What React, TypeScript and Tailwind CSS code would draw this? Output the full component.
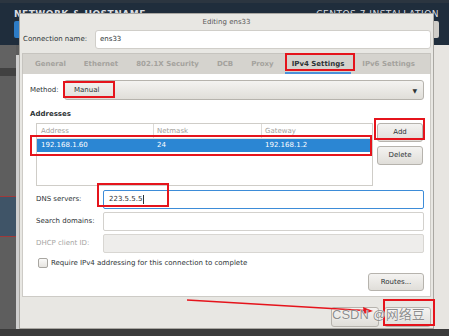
import * as React from "react"

const tabs = [
  { label: "General" },
  { label: "Ethernet" },
  { label: "802.1X Security" },
  { label: "DCB" },
  { label: "Proxy" },
  { label: "IPv4 Settings", active: true },
  { label: "IPv6 Settings" },
]

// red annotation boxes drawn on top of the screenshot
const marks = [
  "left-[285px] top-[53px] w-[70px] h-[18px]",
  "left-[63px] top-[81px] w-[52px] h-[17px]",
  "left-[30px] top-[135px] w-[342px] h-[21px]",
  "left-[374px] top-[118px] w-[51px] h-[22px]",
  "left-[97px] top-[183px] w-[72px] h-[24px]",
  "left-[383px] top-[299px] w-[52px] h-[27px]",
]

const btnBase =
  "flex items-center rounded-[3px] border border-[#b6b3ad] bg-gradient-to-b from-[#f4f3f1] to-[#e0ded9] text-[#2e3436]"

function Field({
  label,
  value,
  focused,
  disabled,
}: {
  label: string
  value?: string
  focused?: boolean
  disabled?: boolean
}) {
  return (
    <div className="flex items-center h-[19px]">
      <span
        className={
          "w-[67px] shrink-0 " + (disabled ? "text-[#a5a5a3]" : "text-[#2e3436]")
        }
      >
        {label}
      </span>
      <div
        className={
          "flex-1 h-full rounded-[2px] flex items-center px-[5px] " +
          (focused
            ? "border border-[#3d8cd8] bg-white"
            : disabled
              ? "border border-[#d8d6d2] bg-[#eeedeb]"
              : "border border-[#d3d1cd] bg-white")
        }
      >
        {value && (
          <span className="text-[#2e3436]">
            {value}
            <span className="inline-block w-px h-[9px] bg-[#2e3436] align-middle ml-px" />
          </span>
        )}
      </div>
    </div>
  )
}

function Btn({ children, className }: { children?: React.ReactNode; className?: string }) {
  return <div className={btnBase + " justify-center " + (className ?? "")}>{children}</div>
}

export default function App() {
  return (
    <div className="relative w-[449px] h-[336px] overflow-hidden bg-[#5c5c5c] font-['DejaVu_Sans',sans-serif] text-[7px] leading-[9px]">
      {/* underlying installer screen (dimmed) */}
      <div className="flex flex-col h-full">
        <div className="h-[45px] shrink-0 bg-[#1f2d3c] border-t-[3px] border-[#2b3540] flex justify-between">
          <div className="pl-[14px] pt-[7px] flex flex-col gap-[2px]">
            <span className="text-[#d9dde2] font-bold text-[9px] leading-[9px] tracking-[0.5px]">
              NETWORK &amp; HOSTNAME
            </span>
            <div className="w-[40px] h-[17px] rounded-[2px] bg-[#2d7cc6]" />
          </div>
          <div className="pr-[10px] pt-[7px] flex flex-col items-end gap-[2px]">
            <span className="text-[#d9dde2] text-[9px] leading-[9px] tracking-[0.5px]">
              CENTOS 7 INSTALLATION
            </span>
            <div className="w-[40px] h-[17px] rounded-[2px] bg-[#cfcdc8]" />
          </div>
        </div>
        <div className="flex flex-1">
          <div className="w-[16px] flex flex-col">
            <div className="h-[23px] bg-[#626262]" />
            <div className="h-[8px] bg-[#414141]" />
            <div className="h-[120px] bg-[#5e5e5e]" />
            <div className="h-px bg-[#a03a3a]" />
            <div className="h-[39px] bg-[#3f5467]" />
            <div className="h-px bg-[#a03a3a]" />
            <div className="flex-1 bg-[#5e5e5e]" />
          </div>
          <div className="w-[3px] mt-[10px] bg-[#cfcfcf]" />
          <div className="flex-1 bg-[#e7e5e1]" />
        </div>
        <div className="h-[7px] shrink-0 bg-[#3b3b3b]" />
      </div>

      {/* Editing dialog */}
      <div className="absolute left-[19px] top-[13px] w-[415px] h-[316px] border border-[#a9a7a2] bg-[#e8e7e3] px-[2px] flex flex-col">
        <div className="h-[16px] shrink-0 flex items-center justify-center text-[#5a5a5a]">
          Editing ens33
        </div>

        <div className="h-[19px] shrink-0 flex items-center pl-px">
          <span className="text-[#2e3436] w-[72px] shrink-0">Connection name:</span>
          <div className="flex-1 h-full rounded-[3px] border border-[#d0cec9] bg-white flex items-center px-[4px] text-[#2e3436]">
            ens33
          </div>
        </div>

        {/* notebook */}
        <div className="mt-[4px] h-[21px] shrink-0 bg-[#d5d3ce] border border-b-0 border-[#c6c4bf] flex pl-[5px] gap-[4px]">
          {tabs.map((t) => (
            <div
              key={t.label}
              className={
                "h-full flex items-center px-[7px] font-bold " +
                (t.active
                  ? "text-[#2e3436] border-b-[2px] border-[#4a90d9] pt-[2px]"
                  : "text-[#a4a29d]")
              }
            >
              {t.label}
            </div>
          ))}
        </div>

        <div className="h-[223px] shrink-0 bg-white border border-t-0 border-[#cdcbc6] pl-[7px] pr-[6px] pt-[6px] flex flex-col">
          <div className="flex items-center h-[20px]">
            <span className="text-[#2e3436] w-[34px] shrink-0">Method:</span>
            <div className={btnBase + " flex-1 h-full justify-between pl-[9px] pr-[6px]"}>
              <span>Manual</span>
              <span className="text-[6px]">▼</span>
            </div>
          </div>

          <div className="mt-[10px] font-bold text-[#2e3436]">Addresses</div>

          <div className="mt-[4px] flex gap-[4px] pl-[6px]">
            <div className="w-[337px] h-[63px] border border-[#cfcdc8] flex flex-col">
              <div className="h-[15px] flex text-[#a3a19c] border-b border-[#e2e0dc]">
                <div className="w-[117px] pl-[4px] flex items-center border-r border-[#dddbd7]">
                  Address
                </div>
                <div className="w-[108px] pl-[3px] flex items-center border-r border-[#dddbd7]">
                  Netmask
                </div>
                <div className="flex-1 pl-[3px] flex items-center">Gateway</div>
              </div>
              <div className="h-[13px] flex bg-[#2b86d3] text-white">
                <div className="w-[117px] pl-[4px] flex items-center">192.168.1.60</div>
                <div className="w-[108px] pl-[3px] flex items-center">24</div>
                <div className="flex-1 pl-[3px] flex items-center">192.168.1.2</div>
              </div>
            </div>
            <div className="flex flex-col gap-[4px] w-[46px]">
              <Btn className="h-[19px]">Add</Btn>
              <Btn className="h-[19px]">Delete</Btn>
            </div>
          </div>

          <div className="mt-[4px] pl-[6px] flex flex-col gap-[3px]">
            <Field label="DNS servers:" value="223.5.5.5" focused />
            <Field label="Search domains:" />
            <Field label="DHCP client ID:" disabled />
          </div>

          <div className="mt-[5px] pl-[8px] flex items-center gap-[3px] h-[10px]">
            <div className="w-[10px] h-[10px] rounded-[2px] border border-[#a8a6a1] bg-gradient-to-b from-[#fafaf9] to-[#e6e4e0]" />
            <span className="text-[#2e3436]">
              Require IPv4 addressing for this connection to complete
            </span>
          </div>

          <div className="mt-[5px] flex justify-end">
            <Btn className="w-[56px] h-[18px]">Routes...</Btn>
          </div>
        </div>

        {/* Cancel / Save, labels hidden under the watermark in the original */}
        <div className="mt-[10px] flex justify-end gap-[5px]">
          <Btn className="w-[48px] h-[20px]" />
          <Btn className="w-[47px] h-[20px]" />
        </div>
      </div>

      {/* annotations */}
      {marks.map((m) => (
        <div key={m} className={"absolute border-2 border-[#e5141c] " + m} />
      ))}
      <svg className="absolute left-0 top-0" width="449" height="336">
        <line x1="187" y1="300" x2="365" y2="310.5" stroke="#e5141c" strokeWidth="1.6" />
        <polygon points="373,311 363,307 364,314" fill="#e5141c" />
      </svg>
      <div className="absolute left-[332px] top-[308px] text-[13px] leading-[14px] font-['Liberation_Sans','Noto_Sans_CJK_SC',sans-serif] text-[#8d8d8d] [text-shadow:0_0_1px_#fff,0_0_1px_#fff]">
        CSDN @网络豆
      </div>
    </div>
  )
}
